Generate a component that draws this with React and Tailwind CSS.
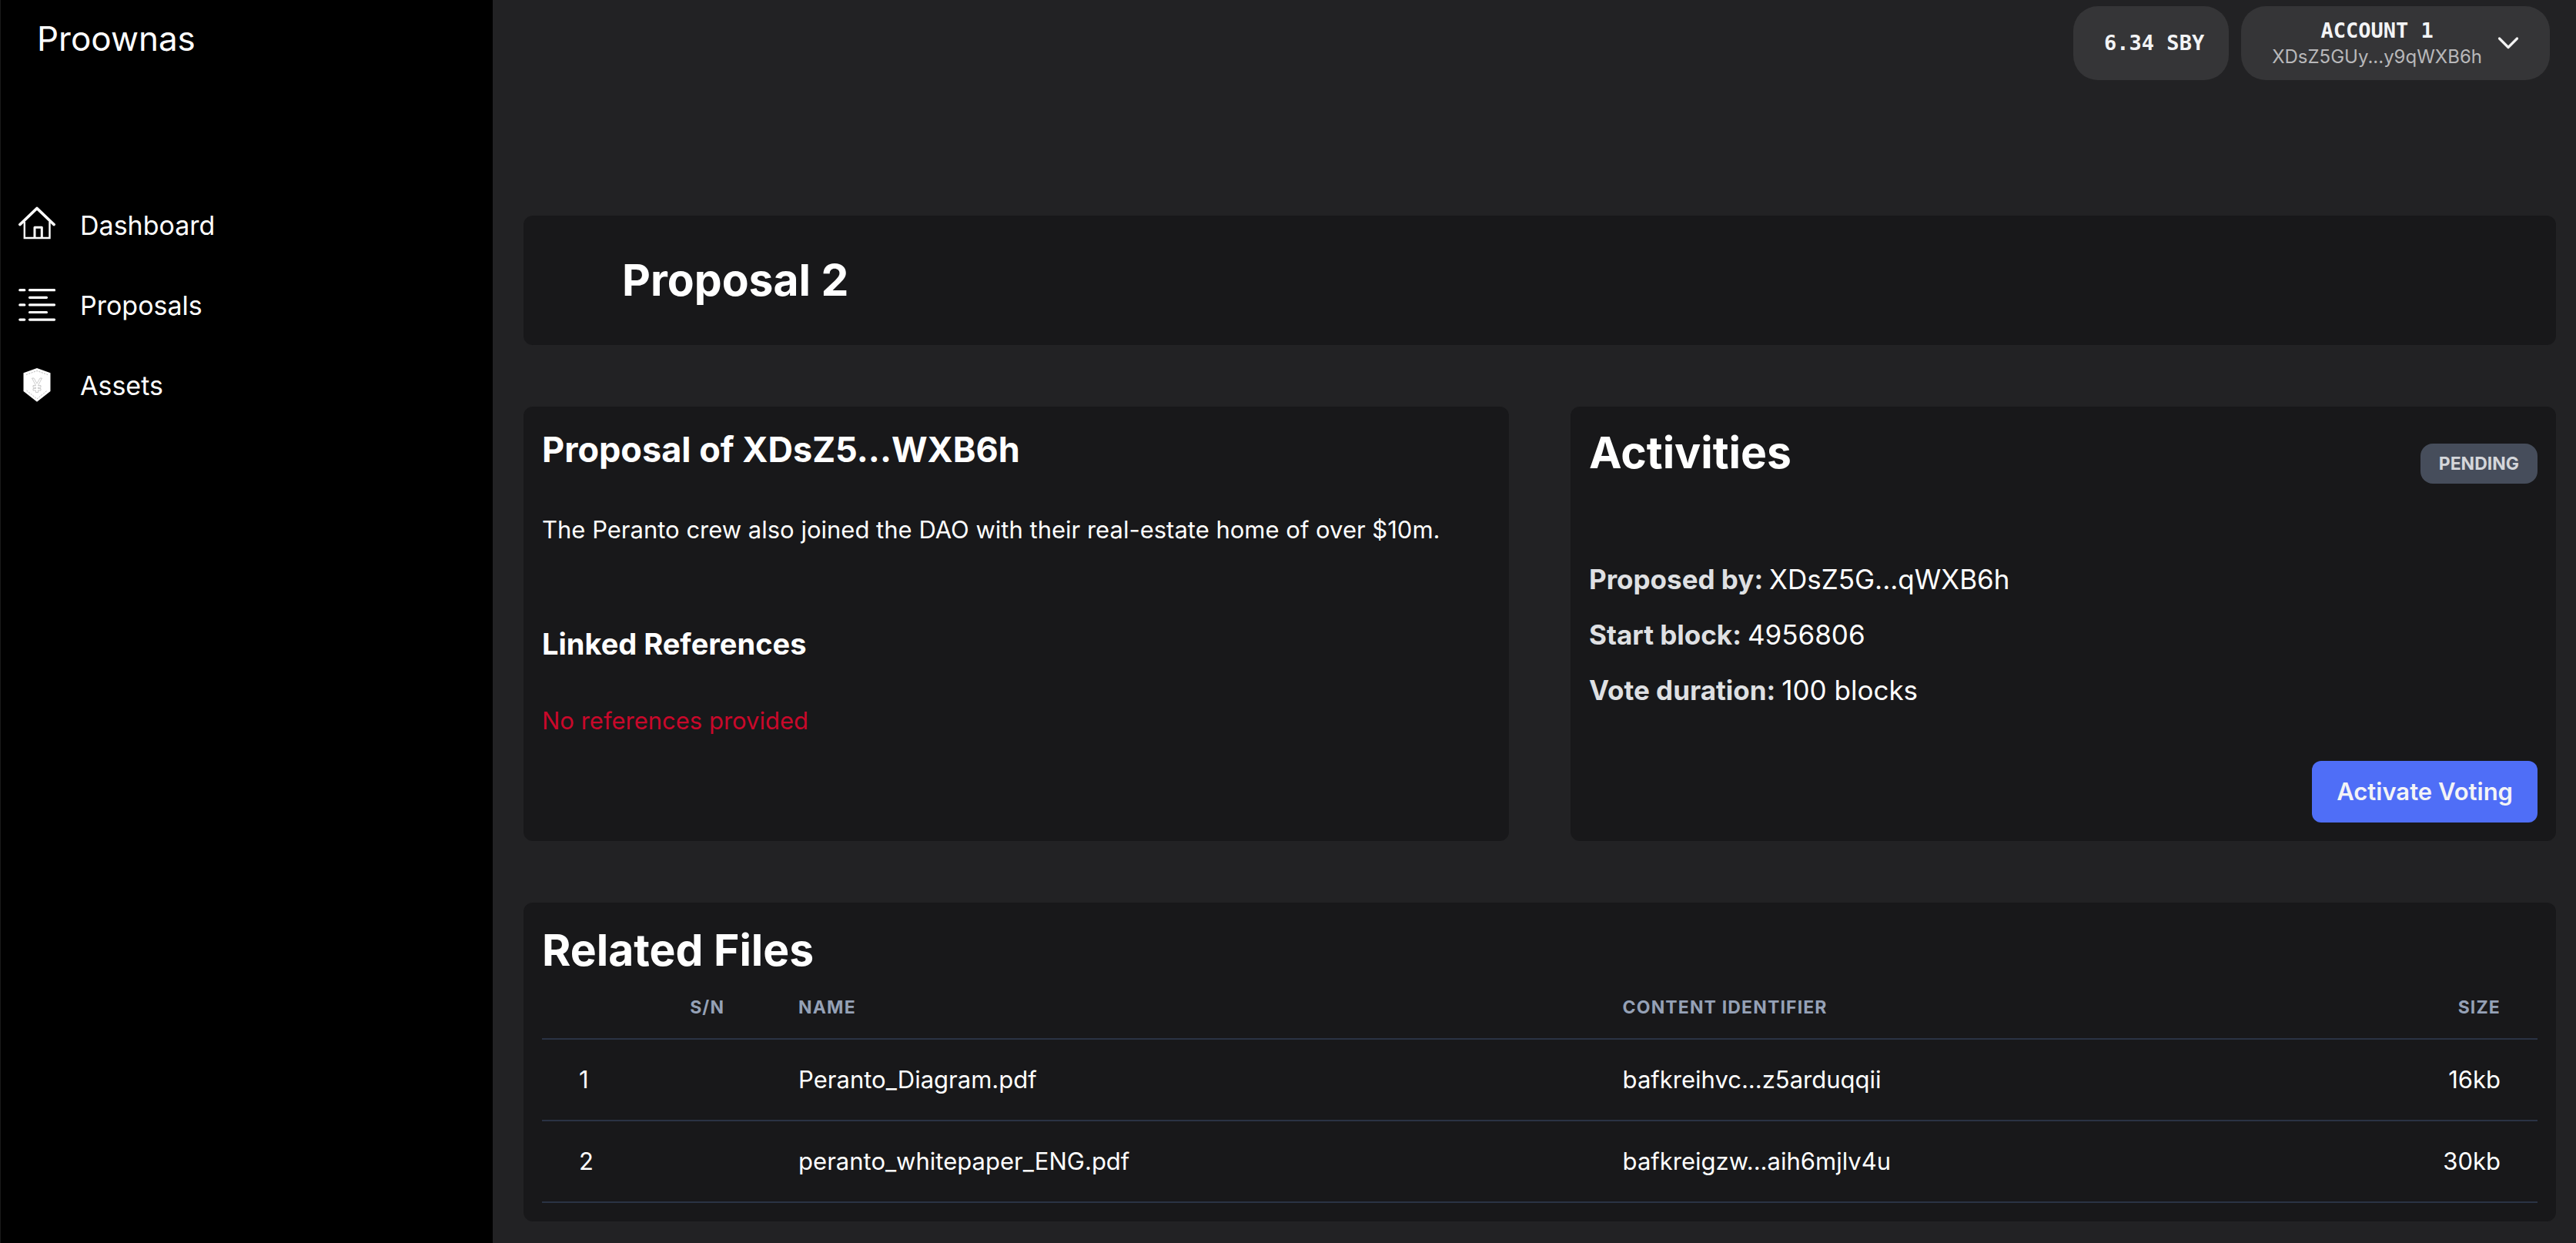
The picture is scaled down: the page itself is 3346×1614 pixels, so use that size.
const navItems = [
  { label: "Dashboard", icon: HouseIcon, href: "#dashboard" },
  { label: "Proposals", icon: ListIcon, href: "#proposals" },
  { label: "Assets", icon: ShieldIcon, href: "#assets" },
];

const activity = [
  { label: "Proposed by:", value: "XDsZ5G...qWXB6h" },
  { label: "Start block:", value: "4956806" },
  { label: "Vote duration:", value: "100 blocks" },
];

const files = [
  { id: 1, name: "Peranto_Diagram.pdf", cid: "bafkreihvc...z5arduqqii", size: "16kb" },
  { id: 2, name: "peranto_whitepaper_ENG.pdf", cid: "bafkreigzw...aih6mjlv4u", size: "30kb" },
];

function HouseIcon() {
  return (
    <svg viewBox="0 0 48 48" className="size-12 shrink-0" fill="none" stroke="currentColor" aria-hidden="true">
      <path d="M2 23.5 24 2.5 46 23.5" strokeWidth="3.8" strokeLinecap="round" strokeLinejoin="round" />
      <path d="M7.800 20v21h32.700V20" strokeWidth="2.4" />
      <path d="M21 41V27.200h9.300V41" strokeWidth="3" strokeLinejoin="round" />
    </svg>
  );
}

function ListIcon() {
  return (
    <svg viewBox="0 0 48 48" className="size-12 shrink-0" fill="none" stroke="currentColor" strokeWidth="3.2" strokeLinecap="round" aria-hidden="true">
      <path d="M1.800 4.700h6M1.800 23.900h6M1.800 43.100h6" />
      <path d="M14.500 4.700h32M14.500 14.300h22M14.500 23.900h32M14.500 33.500h22M14.500 43.100h32" />
    </svg>
  );
}

function ShieldIcon() {
  return (
    <svg viewBox="0 0 48 48" className="size-12 shrink-0" fill="none" aria-hidden="true">
      <path d="M24 2 41.500 8.200V32L24 45.800 6.500 32V8.200Z" fill="#fff" />
      <path d="M10 10.500l14-5 14 5M10.500 31 24 42 37.500 31" stroke="#999" strokeWidth="0.700" strokeDasharray="2 1.500" />
      <path
        d="M17.500 15l5 9.500h-3.500V27h3.500v1.500H19V31h3.500v2.500h3V31H29v-2.500h-3.500V27H29v-2.500h-3.500l5-9.500H28l-4 7-4-7Z"
        stroke="#aaa"
        strokeWidth="0.600"
      />
    </svg>
  );
}

function ChevronIcon() {
  return (
    <svg viewBox="0 0 28 18" className="h-[18px] w-7 shrink-0" fill="none" stroke="#f3f3f3" strokeWidth="3.2" strokeLinecap="round" strokeLinejoin="round" aria-hidden="true">
      <path d="M2.500 3 14 14.500 25.500 3" />
    </svg>
  );
}

function Sidebar() {
  return (
    <aside className="w-[640px] shrink-0 bg-black shadow-[inset_1px_0_0_#1a1a1a]">
      <div className="px-12 pt-5 text-[44px] leading-[60px]">Proownas</div>
      <nav className="mt-[160px] flex flex-col">
        {navItems.map(({ label, icon: Icon, href }) => (
          <a key={label} href={href} className="flex h-[104px] items-center gap-8 px-6 text-[34px]">
            <Icon />
            {label}
          </a>
        ))}
      </nav>
    </aside>
  );
}

function Header() {
  return (
    <header className="flex justify-end gap-4 pt-2 pr-2">
      <button className="h-24 rounded-[32px] bg-[#353537] pr-8 pl-10 font-['DejaVu_Sans_Mono',monospace] text-[27px] font-bold text-gray-100">
        6.34 SBY
      </button>
      <button className="flex h-24 items-center gap-5 rounded-[32px] bg-[#353537] px-10">
        <span className="flex flex-col items-center">
          <span className="font-['DejaVu_Sans_Mono',monospace] text-[27px] leading-9 font-bold text-gray-100">ACCOUNT 1</span>
          <span className="text-[24px] leading-8 text-[#b8b8ba]">XDsZ5GUy...y9qWXB6h</span>
        </span>
        <ChevronIcon />
      </button>
    </header>
  );
}

function Card({ className = "", children }) {
  return <section className={"rounded-xl bg-[#18181a] " + className}>{children}</section>;
}

export default function App() {
  return (
    <div className="flex min-h-screen bg-[#222224] font-[Inter,sans-serif] text-white">
      <Sidebar />
      <main className="min-w-0 flex-1 pr-[26px] pb-7 pl-10">
        <Header />

        <Card className="mt-44 px-32 py-11">
          <h1 className="text-[57px] leading-[80px] font-bold">Proposal 2</h1>
        </Card>

        <div className="mt-20 grid grid-cols-2 gap-20">
          <Card className="p-6">
            <h2 className="text-[45px] leading-[64px] font-bold">Proposal of XDsZ5...WXB6h</h2>
            <p className="mt-12 text-[31px] leading-12">
              The Peranto crew also joined the DAO with their real-estate home of over $10m.
            </p>
            <h3 className="mt-24 text-[38px] leading-[56px] font-bold">Linked References</h3>
            <p className="mt-12 text-[31px] leading-12 text-[#c9082a]">No references provided</p>
          </Card>

          <Card className="flex flex-col p-6">
            <div className="flex items-start justify-between">
              <h2 className="text-[57px] leading-[72px] font-bold">Activities</h2>
              <span className="mt-6 rounded-2xl bg-[#464d5b] px-6 text-[23px] leading-[52px] font-bold text-[#d4d6da]">
                PENDING
              </span>
            </div>
            <dl className="mt-[88px]">
              {activity.map(({ label, value }) => (
                <div key={label} className="flex gap-2 text-[35px] leading-[72px]">
                  <dt className="font-bold text-[#dfe0e3]">{label}</dt>
                  <dd>{value}</dd>
                </div>
              ))}
            </dl>
            <button className="mt-14 self-end rounded-xl bg-[#4f6ef7] px-8 text-[31px] leading-[80px] font-semibold text-gray-100">
              Activate Voting
            </button>
          </Card>
        </div>

        <Card className="mt-20 p-6">
          <h2 className="text-[57px] leading-[76px] font-bold">Related Files</h2>
          <table className="w-full table-fixed border-collapse text-left">
            <thead>
              <tr className="border-b-2 border-[#2a3344] text-[23px] leading-8 tracking-wider text-[#95a1b6]">
                <th className="w-[11%] px-12 pt-5 pb-6 text-right font-bold">S/N</th>
                <th className="w-[41.3%] px-12 pt-5 pb-6 font-bold">NAME</th>
                <th className="px-12 pt-5 pb-6 font-bold">CONTENT IDENTIFIER</th>
                <th className="w-[11%] px-12 pt-5 pb-6 text-right font-bold">SIZE</th>
              </tr>
            </thead>
            <tbody>
              {files.map(({ id, name, cid, size }) => (
                <tr key={id} className="h-[106px] border-b-2 border-[#2a3344] text-[31px]">
                  <td className="px-12">{id}</td>
                  <td className="px-12">{name}</td>
                  <td className="px-12">{cid}</td>
                  <td className="px-12 text-right">{size}</td>
                </tr>
              ))}
            </tbody>
          </table>
        </Card>
      </main>
    </div>
  );
}
